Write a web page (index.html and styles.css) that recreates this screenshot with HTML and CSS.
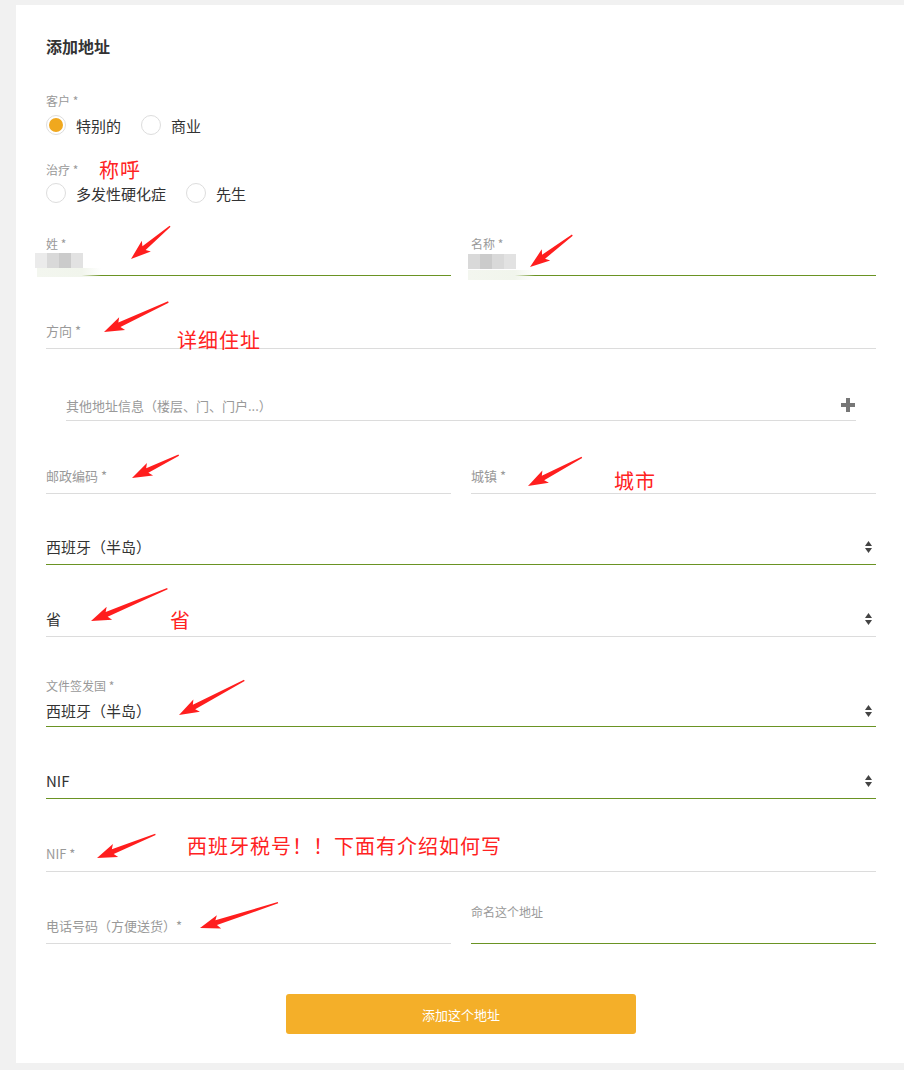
FILE: index.html
```html
<!DOCTYPE html>
<html lang="zh-CN">
<head>
    <meta charset="UTF-8">
    <meta name="viewport" content="width=device-width, initial-scale=1.0">
    <title>添加地址</title>
    <link rel="stylesheet" href="styles.css">
</head>
<body>
    <div class="card">
        <h1>添加地址</h1>

        <div class="group-label gap-customer">客户 *</div>
        <div class="radios">
            <label class="radio"><span class="dot checked"></span>特别的</label>
            <label class="radio"><span class="dot"></span>商业</label>
        </div>

        <div class="group-label gap-treat">治疗 *</div>
        <div class="radios tight">
            <label class="radio"><span class="dot"></span>多发性硬化症</label>
            <label class="radio"><span class="dot"></span>先生</label>
        </div>

        <div class="row gap-name">
            <div class="field">
                <div class="field-label">姓 *</div>
                <div class="control short valid"></div>
                <div class="mosaic mosaic-left">
                    <span class="c1"></span><span class="c2"></span><span class="c3"></span><span class="c4"></span>
                </div>
                <div class="smudge smudge-left"></div>
            </div>
            <div class="field">
                <div class="field-label">名称 *</div>
                <div class="control short valid"></div>
                <div class="mosaic mosaic-right">
                    <span class="c2"></span><span class="c3"></span><span class="c2"></span><span class="c4"></span>
                </div>
                <div class="smudge smudge-right"></div>
            </div>
        </div>

        <div class="control gap-38">方向 *</div>

        <div class="control extra">
            <span>其他地址信息（楼层、门、门户...）</span>
            <svg class="plus" width="14" height="14" viewBox="0 0 14 14"><rect x="0" y="5" width="14" height="4" fill="#777"/><rect x="5" y="0" width="4" height="14" fill="#777"/></svg>
        </div>

        <div class="row gap-38">
            <div class="control">邮政编码 *</div>
            <div class="control">城镇 *</div>
        </div>

        <div class="control select valid gap-36">
            <span>西班牙（半岛）</span>
            <svg class="updown" width="7" height="12" viewBox="0 0 7 12"><polygon points="0,5 3.5,0 7,5" fill="#444"/><polygon points="0,7 3.5,12 7,7" fill="#444"/></svg>
        </div>

        <div class="control select gap-37">
            <span>省</span>
            <svg class="updown" width="7" height="12" viewBox="0 0 7 12"><polygon points="0,5 3.5,0 7,5" fill="#444"/><polygon points="0,7 3.5,12 7,7" fill="#444"/></svg>
        </div>

        <div class="field gap-41">
            <div class="field-label">文件签发国 *</div>
            <div class="control select mid valid">
                <span>西班牙（半岛）</span>
                <svg class="updown" width="7" height="12" viewBox="0 0 7 12"><polygon points="0,5 3.5,0 7,5" fill="#444"/><polygon points="0,7 3.5,12 7,7" fill="#444"/></svg>
            </div>
        </div>

        <div class="control select valid gap-37">
            <span>NIF</span>
            <svg class="updown" width="7" height="12" viewBox="0 0 7 12"><polygon points="0,5 3.5,0 7,5" fill="#444"/><polygon points="0,7 3.5,12 7,7" fill="#444"/></svg>
        </div>

        <div class="control gap-38">NIF *</div>

        <div class="row bottom gap-phone">
            <div class="control">电话号码（方便送货）*</div>
            <div class="field">
                <div class="field-label">命名这个地址</div>
                <div class="control short valid"></div>
            </div>
        </div>

        <button class="submit">添加这个地址</button>
    </div>

    <!-- screenshot annotations -->
    <div class="notes">
        <span class="note" style="left:99px; top:157px;">称呼</span>
        <span class="note" style="left:177px; top:327px;">详细住址</span>
        <span class="note" style="left:614px; top:468px;">城市</span>
        <span class="note" style="left:170px; top:607px;">省</span>
        <span class="note" style="left:187px; top:833px;">西班牙税号！！下面有介绍如何写</span>
        <svg class="arrows" width="904" height="1070" viewBox="0 0 904 1070">
            <g fill="#ff1e1e">
                <path transform="translate(131 259) rotate(-40)" d="M0,0 L20,-7 L17,-2.5 L51,-0.7 L51,0.7 L17,2.5 L20,7 Z"/>
                <path transform="translate(530 267) rotate(-37)" d="M0,0 L20,-7 L17,-2.5 L53,-0.7 L53,0.7 L17,2.5 L20,7 Z"/>
                <path transform="translate(104 332) rotate(-25)" d="M0,0 L20,-7 L17,-2.5 L71,-0.7 L71,0.7 L17,2.5 L20,7 Z"/>
                <path transform="translate(132 478) rotate(-26)" d="M0,0 L20,-7 L17,-2.5 L52,-0.7 L52,0.7 L17,2.5 L20,7 Z"/>
                <path transform="translate(528 486) rotate(-28)" d="M0,0 L20,-7 L17,-2.5 L61,-0.7 L61,0.7 L17,2.5 L20,7 Z"/>
                <path transform="translate(91 621) rotate(-23)" d="M0,0 L20,-7 L17,-2.5 L83,-0.7 L83,0.7 L17,2.5 L20,7 Z"/>
                <path transform="translate(179 715) rotate(-28)" d="M0,0 L20,-7 L17,-2.5 L74,-0.7 L74,0.7 L17,2.5 L20,7 Z"/>
                <path transform="translate(97 858) rotate(-22)" d="M0,0 L20,-7 L17,-2.5 L63,-0.7 L63,0.7 L17,2.5 L20,7 Z"/>
                <path transform="translate(200 928) rotate(-18)" d="M0,0 L20,-7 L17,-2.5 L82,-0.7 L82,0.7 L17,2.5 L20,7 Z"/>
            </g>
        </svg>
    </div>
</body>
</html>
```

FILE: styles.css
```css
* {
    box-sizing: border-box;
}

body {
    margin: 0;
    padding: 5px 0 0 16px;
    background: #f1f1f1;
    font-family: "Noto Sans CJK SC", "Noto Sans", sans-serif;
    color: #333;
    overflow: hidden;
    position: relative;
}

.card {
    width: 890px;
    background: #fff;
    padding: 30px 30px 29px;
}

h1 {
    margin: 0;
    font-size: 16px;
    line-height: 22px;
    font-weight: bold;
    color: #333;
}

.group-label,
.field-label {
    font-size: 12px;
    line-height: 16px;
    color: #999;
}

.gap-customer { margin-top: 36px; }
.gap-treat { margin-top: 25px; }
.gap-name { margin-top: 31px; }
.gap-36 { margin-top: 36px; }
.gap-37 { margin-top: 37px; }
.gap-38 { margin-top: 38px; }
.gap-41 { margin-top: 41px; }
.gap-phone { margin-top: 32px; }

.radios {
    display: flex;
    align-items: center;
    gap: 20px;
    height: 24px;
    margin-top: 4px;
}

.radios.tight {
    margin-top: 3px;
}

.radio {
    display: flex;
    align-items: center;
    gap: 10px;
    font-size: 15px;
    color: #333;
}

.dot {
    width: 20px;
    height: 20px;
    border: 1px solid #ddd;
    border-radius: 50%;
    display: flex;
    align-items: center;
    justify-content: center;
}

.dot.checked::after {
    content: "";
    width: 14px;
    height: 14px;
    border-radius: 50%;
    background: #f0a81e;
}

.row {
    display: grid;
    grid-template-columns: 1fr 1fr;
    gap: 20px;
}

.row.bottom {
    align-items: end;
}

.field {
    position: relative;
}

.control {
    height: 35px;
    border-bottom: 1px solid #dcdcdc;
    font-size: 13px;
    line-height: 34px;
    color: #999;
    display: flex;
    align-items: center;
    justify-content: space-between;
}

.control.valid {
    border-bottom-color: #6a9323;
}

.control.short {
    height: 24px;
}

.control.mid {
    height: 31px;
    margin-top: 2px;
}

.control.select {
    font-size: 15px;
    color: #333;
}

.control.extra {
    margin: 37px 20px 0;
    padding-top: 6px;
    line-height: 28px;
}

.plus {
    margin-right: 1px;
    margin-top: -3px;
}

.updown {
    margin-right: 4px;
}

.mosaic {
    position: absolute;
    display: flex;
}

.mosaic span {
    width: 12px;
    height: 15px;
}

.mosaic .c1 { background: #ebebeb; }
.mosaic .c2 { background: #d9d9d9; }
.mosaic .c3 { background: #cbcbcb; }
.mosaic .c4 { background: #e2e2e2; }

.mosaic-left {
    left: -11px;
    top: 17px;
}

.mosaic-right {
    left: -3px;
    top: 18px;
}

.smudge {
    position: absolute;
    background: linear-gradient(90deg, #f3f6ef, #f1f5ec 70%, rgba(255, 255, 255, 0));
}

.smudge-left {
    left: -9px;
    top: 32px;
    width: 64px;
    height: 9px;
}

.smudge-right {
    left: -3px;
    top: 34px;
    width: 67px;
    height: 10px;
}

.submit {
    display: block;
    width: 350px;
    height: 40px;
    margin: 50px auto 0;
    border: none;
    border-radius: 3px;
    background: #f4af29;
    color: #fff;
    font-family: inherit;
    font-size: 13px;
}

.notes {
    position: absolute;
    left: 0;
    top: 0;
    width: 904px;
    height: 1070px;
    pointer-events: none;
}

.note {
    position: absolute;
    font-size: 20px;
    line-height: 26px;
    letter-spacing: 1px;
    color: #ff2222;
    white-space: nowrap;
}

.arrows {
    position: absolute;
    left: 0;
    top: 0;
}
```
